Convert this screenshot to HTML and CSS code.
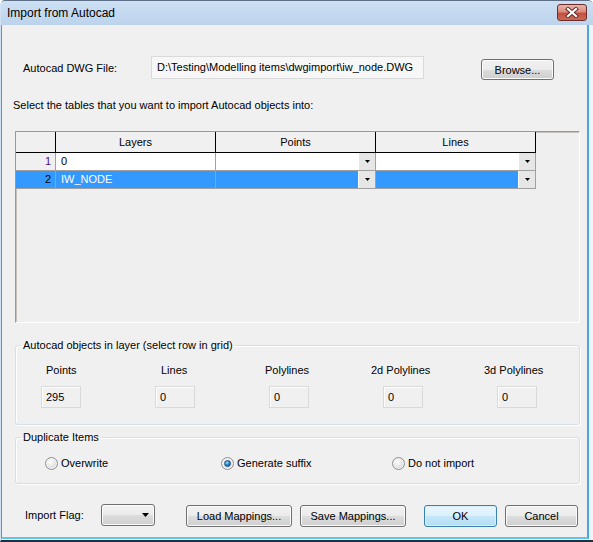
FILE: index.html
```html
<!DOCTYPE html>
<html>
<head>
<meta charset="utf-8">
<title>Import from Autocad</title>
<link rel="stylesheet" href="styles.css">
</head>
<body>
<div class="window">
  <div class="titlebar">
    <span class="title">Import from Autocad</span>
    <div class="close">
      <svg width="14" height="11" viewBox="0 0 14 11"><path d="M3 2 L11 9 M11 2 L3 9" stroke="#5a2a28" stroke-width="4" stroke-linecap="square"/><path d="M3 2 L11 9 M11 2 L3 9" stroke="#ffffff" stroke-width="2.2" stroke-linecap="square"/></svg>
    </div>
  </div>
  <div class="client">
    <div class="file-row">
      <span class="file-label">Autocad DWG File:</span>
      <div class="path-box">D:\Testing\Modelling items\dwgimport\iw_node.DWG</div>
      <button class="btn browse">Browse...</button>
    </div>
    <p class="instr">Select the tables that you want to import Autocad objects into:</p>
    <div class="datagrid">
      <div class="dg-row dg-head">
        <div class="dg-cell"></div>
        <div class="dg-cell">Layers</div>
        <div class="dg-cell">Points</div>
        <div class="dg-cell">Lines</div>
      </div>
      <div class="dg-row dg-body">
        <div class="dg-cell rowhead">1</div>
        <div class="dg-cell">0</div>
        <div class="dg-cell combo-cell"><span class="dd"><svg width="5" height="3" viewBox="0 0 5 3"><polygon points="0,0 5,0 2.5,3" fill="#000"/></svg></span></div>
        <div class="dg-cell combo-cell"><span class="dd"><svg width="5" height="3" viewBox="0 0 5 3"><polygon points="0,0 5,0 2.5,3" fill="#000"/></svg></span></div>
      </div>
      <div class="dg-row dg-body selected">
        <div class="dg-cell rowhead">2</div>
        <div class="dg-cell">IW_NODE</div>
        <div class="dg-cell combo-cell"><span class="dd"><svg width="5" height="3" viewBox="0 0 5 3"><polygon points="0,0 5,0 2.5,3" fill="#000"/></svg></span></div>
        <div class="dg-cell combo-cell"><span class="dd"><svg width="5" height="3" viewBox="0 0 5 3"><polygon points="0,0 5,0 2.5,3" fill="#000"/></svg></span></div>
      </div>
    </div>
    <fieldset class="group objects">
      <legend>Autocad objects in layer (select row in grid)</legend>
      <div class="obj-grid">
        <div class="obj-col c1"><span class="obj-label">Points</span><div class="obj-box">295</div></div>
        <div class="obj-col c2"><span class="obj-label">Lines</span><div class="obj-box">0</div></div>
        <div class="obj-col c3"><span class="obj-label">Polylines</span><div class="obj-box">0</div></div>
        <div class="obj-col c4"><span class="obj-label">2d Polylines</span><div class="obj-box">0</div></div>
        <div class="obj-col c5"><span class="obj-label">3d Polylines</span><div class="obj-box">0</div></div>
      </div>
    </fieldset>
    <fieldset class="group dup">
      <legend>Duplicate Items</legend>
      <div class="radio-row">
        <label class="radio-item r1"><span class="radio"></span>Overwrite</label>
        <label class="radio-item r2"><span class="radio checked"></span>Generate suffix</label>
        <label class="radio-item r3"><span class="radio"></span>Do not import</label>
      </div>
    </fieldset>
    <div class="bottom-row">
      <span class="flag-label">Import Flag:</span>
      <div class="combo"><svg width="7" height="4" viewBox="0 0 7 4"><polygon points="0,0 7,0 3.5,4" fill="#000"/></svg></div>
      <button class="btn load">Load Mappings...</button>
      <button class="btn save">Save Mappings...</button>
      <button class="btn ok">OK</button>
      <button class="btn cancel">Cancel</button>
    </div>
  </div>
</div>
</body>
</html>
```

FILE: styles.css
```css
* { box-sizing: border-box; }
html, body { margin: 0; padding: 0; background: #ffffff; }
body {
  font-family: "Liberation Sans", Arial, sans-serif;
  font-size: 11px;
  color: #000;
}
.window {
  width: 593px;
  height: 542px;
  border-top: 1px solid #5d7087;
  border-left: 1px solid #d3e2f2;
  border-bottom: 2px solid #1f3044;
  border-radius: 5px 5px 0 0;
  background: #eef4fa;
  display: flex;
  flex-direction: column;
  overflow: hidden;
}
.titlebar {
  height: 24px;
  flex: none;
  display: flex;
  justify-content: space-between;
  align-items: flex-start;
  background: linear-gradient(#cde0f4, #bcd3ec);
  padding-left: 6px;
}
.title {
  font-size: 12px;
  line-height: 24px;
  color: #000;
}
.close {
  width: 30px;
  height: 17px;
  margin-top: 3px;
  margin-right: 6px;
  border: 1px solid #6b2e2a;
  border-radius: 3px;
  background: linear-gradient(#e9b3a9 0%, #d98d7f 45%, #c5503f 55%, #c86a55 100%);
  display: flex;
  align-items: center;
  justify-content: center;
}
.client {
  flex: 1;
  background: #f0f0f0;
  border-left: 1px solid #5b92cf;
  border-right: 2px solid #4aa6e6;
  border-bottom: 2px solid #62c3ee;
  margin-right: 4px;
  margin-bottom: 1px;
  padding: 0 7px 0 13px;
  display: flex;
  flex-direction: column;
}
.file-row {
  margin-top: 31px;
  height: 24px;
  display: grid;
  grid-template-columns: 136px 273px 130px;
  align-items: start;
}
.file-label {
  padding-left: 8px;
  line-height: 14px;
  margin-top: 5px;
}
.path-box {
  height: 23px;
  border: 1px solid #dadada;
  background: #f7f7f7;
  padding-left: 5px;
  line-height: 21px;
  white-space: nowrap;
  overflow: hidden;
}
.btn {
  font-family: "Liberation Sans", Arial, sans-serif;
  font-size: 11px;
  color: #000;
  height: 22px;
  padding: 0;
  border: 1px solid #707070;
  border-radius: 3px;
  background: linear-gradient(#f2f2f2 0%, #ebebeb 50%, #dddddd 50%, #cfcfcf 100%);
  box-shadow: inset 0 0 0 1px #fbfbfb;
}
.browse {
  margin-top: 3px;
  height: 21px;
  width: 73px;
  justify-self: end;
}
.instr {
  margin: 18px 0 0 -2px;
  line-height: 14px;
  height: 14px;
}
.datagrid {
  margin-top: 19px;
  height: 192px;
  border-top: 1px solid #9a9794;
  border-left: 1px solid #9a9794;
  border-right: 1px solid #ffffff;
  border-bottom: 1px solid #ffffff;
  background: #efefef;
  box-shadow: inset 1px 1px 0 #c4c1be;
}
.dg-row {
  display: grid;
  grid-template-columns: 40px 160px 160px 160px;
  width: 520px;
}
.dg-head .dg-cell {
  height: 21px;
  border-right: 1px solid #000;
  border-bottom: 1px solid #000;
  background: #f0f0f0;
  text-align: center;
  line-height: 20px;
}
.dg-body .dg-cell {
  height: 18px;
  border-right: 1px solid #a0a0a0;
  border-bottom: 1px solid #a0a0a0;
  background: #ffffff;
  line-height: 17px;
  padding-left: 5px;
  white-space: nowrap;
}
.dg-body .rowhead {
  background: #f0f0f0;
  text-align: right;
  padding: 0 4px 0 0;
  color: #50106e;
}
.dg-body.selected .dg-cell {
  background: #3399ff;
  color: #ffffff;
}
.dg-body.selected .rowhead {
  color: #000;
}
.combo-cell {
  display: flex;
  justify-content: flex-end;
  padding: 0 !important;
}
.dd {
  width: 17px;
  height: 17px;
  background: #e6e6e6;
  border-left: 1px solid #ffffff;
  display: flex;
  align-items: center;
  justify-content: center;
}
.group {
  margin: 0;
  min-width: 0;
  border: 1px solid #d5dfe5;
  border-radius: 3px;
  padding: 0 5px 0 5px;
  box-shadow: inset 1px 1px 0 #ffffff, 1px 1px 0 #ffffff;
}
.group legend {
  padding: 0 2px;
  line-height: 14px;
  font-size: 11px;
}
.objects {
  margin-top: 15px;
  padding-bottom: 16px;
}
.obj-grid {
  display: grid;
  grid-template-columns: repeat(4, 114px) 40px;
  margin-left: 20px;
}
.obj-col {
  display: flex;
  flex-direction: column;
  width: 40px;
}
.obj-label {
  margin-top: 11px;
  line-height: 14px;
  white-space: nowrap;
}
.c1 .obj-label { margin-left: 5px; }
.c2 .obj-label { margin-left: 6px; }
.c3 .obj-label { margin-left: -4px; }
.c4 .obj-label { margin-left: -12px; }
.c5 .obj-label { margin-left: -13px; }
.obj-box {
  margin-top: 9px;
  width: 40px;
  height: 22px;
  border: 1px solid #d9d9d9;
  background: #f0f0f0;
  box-shadow: inset 1px 1px 0 #ffffff;
  padding-left: 4px;
  line-height: 20px;
}
.dup {
  margin-top: 5px;
  padding-bottom: 13px;
}
.radio-row {
  margin-top: 13px;
  height: 13px;
  display: grid;
  grid-template-columns: 176px 171px auto;
  margin-left: 24px;
}
.radio-item {
  display: flex;
  align-items: center;
  gap: 2px;
  line-height: 13px;
  white-space: nowrap;
}
.radio {
  width: 13px;
  height: 13px;
  border-radius: 50%;
  border: 1px solid #8f8f8f;
  background: radial-gradient(circle at 40% 35%, #fdfdfd 0%, #e8e8e8 45%, #c9c9c9 100%);
  box-shadow: inset 0 0 0 1px #f4f4f4;
  margin-right: 1px;
  position: relative;
}
.radio.checked::after {
  content: "";
  position: absolute;
  left: 2px;
  top: 2px;
  width: 7px;
  height: 7px;
  border-radius: 50%;
  background: radial-gradient(circle at 40% 35%, #a6e2ff 0%, #2e8bd3 45%, #163f70 100%);
  border: 1px solid #1c4f80;
  box-sizing: border-box;
}
.bottom-row {
  margin-top: 20px;
  display: flex;
  align-items: flex-start;
}
.flag-label {
  margin-left: 10px;
  width: 76px;
  line-height: 14px;
  margin-top: 4px;
}
.combo {
  width: 54px;
  height: 22px;
  border: 1px solid #707070;
  border-radius: 3px;
  background: linear-gradient(#f2f2f2 0%, #ebebeb 50%, #dddddd 50%, #cfcfcf 100%);
  box-shadow: inset 0 0 0 1px #fbfbfb;
  display: flex;
  align-items: center;
  justify-content: flex-end;
  padding-right: 5px;
}
.load { width: 106px; margin-left: 31px; margin-top: 1px; }
.save { width: 106px; margin-left: 8px; margin-top: 1px; }
.ok {
  width: 73px;
  margin-left: 18px;
  margin-top: 1px;
  border-color: #3c7fb1;
  background: linear-gradient(#ebf6fd 0%, #dbf0fb 50%, #c6e7f9 50%, #b4def5 100%);
  box-shadow: inset 0 0 0 1px #d6f0fd;
}
.cancel { width: 73px; margin-left: 8px; margin-top: 1px; }
```
